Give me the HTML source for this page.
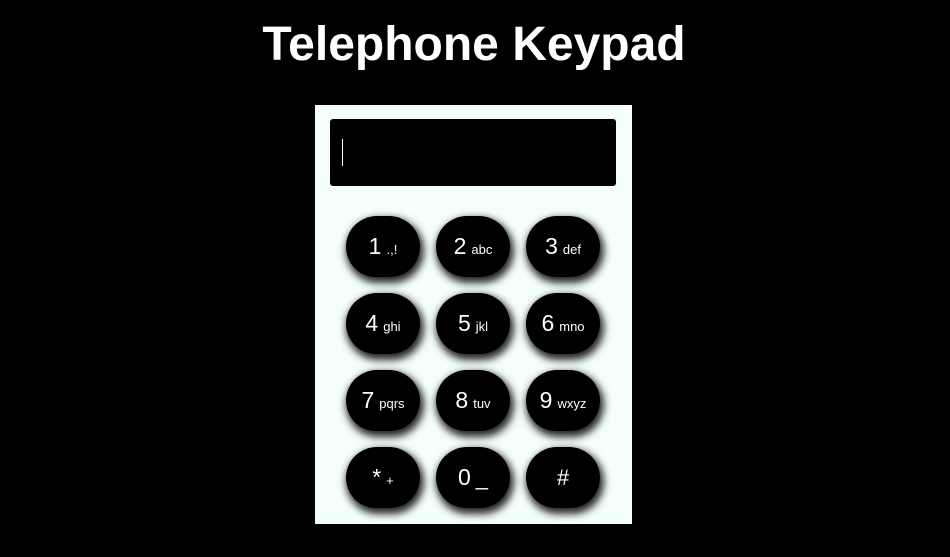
<!DOCTYPE html>
<html><head><meta charset="utf-8"><style>
html,body{margin:0;padding:0;background:#000;width:950px;height:557px;overflow:hidden;font-family:"Liberation Sans",Arial,sans-serif;}
h1{position:absolute;left:0;width:948px;top:17px;margin:0;text-align:center;color:#fff;font-size:48px;font-weight:bold;line-height:56px;}
.panel{position:absolute;left:315px;top:105px;width:317px;height:419px;background:#f5fffa;}
.disp{position:absolute;left:15px;top:14px;width:286px;height:67px;background:#000;border-radius:3px;}
.caret{position:absolute;left:12px;top:20px;width:1px;height:27px;background:#fff;}
.b{position:absolute;width:74px;height:61px;border-radius:42% 42% 40% 40% / 50% 50% 50% 50%;background:#000;color:#fff;box-shadow:2px 4px 8px 2px rgba(0,0,0,.85);display:flex;align-items:center;justify-content:center;font-size:23px;}
.b small{font-size:13px;margin-left:5px;position:relative;top:3px;}
</style></head><body>
<h1>Telephone Keypad</h1>
<div class="panel">
<div class="disp"><div class="caret"></div></div>
<div class="b" style="left:31px;top:111px">1<small>.,!</small></div>
<div class="b" style="left:121px;top:111px">2<small>abc</small></div>
<div class="b" style="left:211px;top:111px">3<small>def</small></div>
<div class="b" style="left:31px;top:188px">4<small>ghi</small></div>
<div class="b" style="left:121px;top:188px">5<small>jkl</small></div>
<div class="b" style="left:211px;top:188px">6<small>mno</small></div>
<div class="b" style="left:31px;top:265px">7<small>pqrs</small></div>
<div class="b" style="left:121px;top:265px">8<small>tuv</small></div>
<div class="b" style="left:211px;top:265px">9<small>wxyz</small></div>
<div class="b" style="left:31px;top:342px">*<small>+</small></div>
<div class="b" style="left:121px;top:342px">0<small style="font-size:22px;top:0">_</small></div>
<div class="b" style="left:211px;top:342px;font-size:22px">#</div>
</div>
</body></html>
